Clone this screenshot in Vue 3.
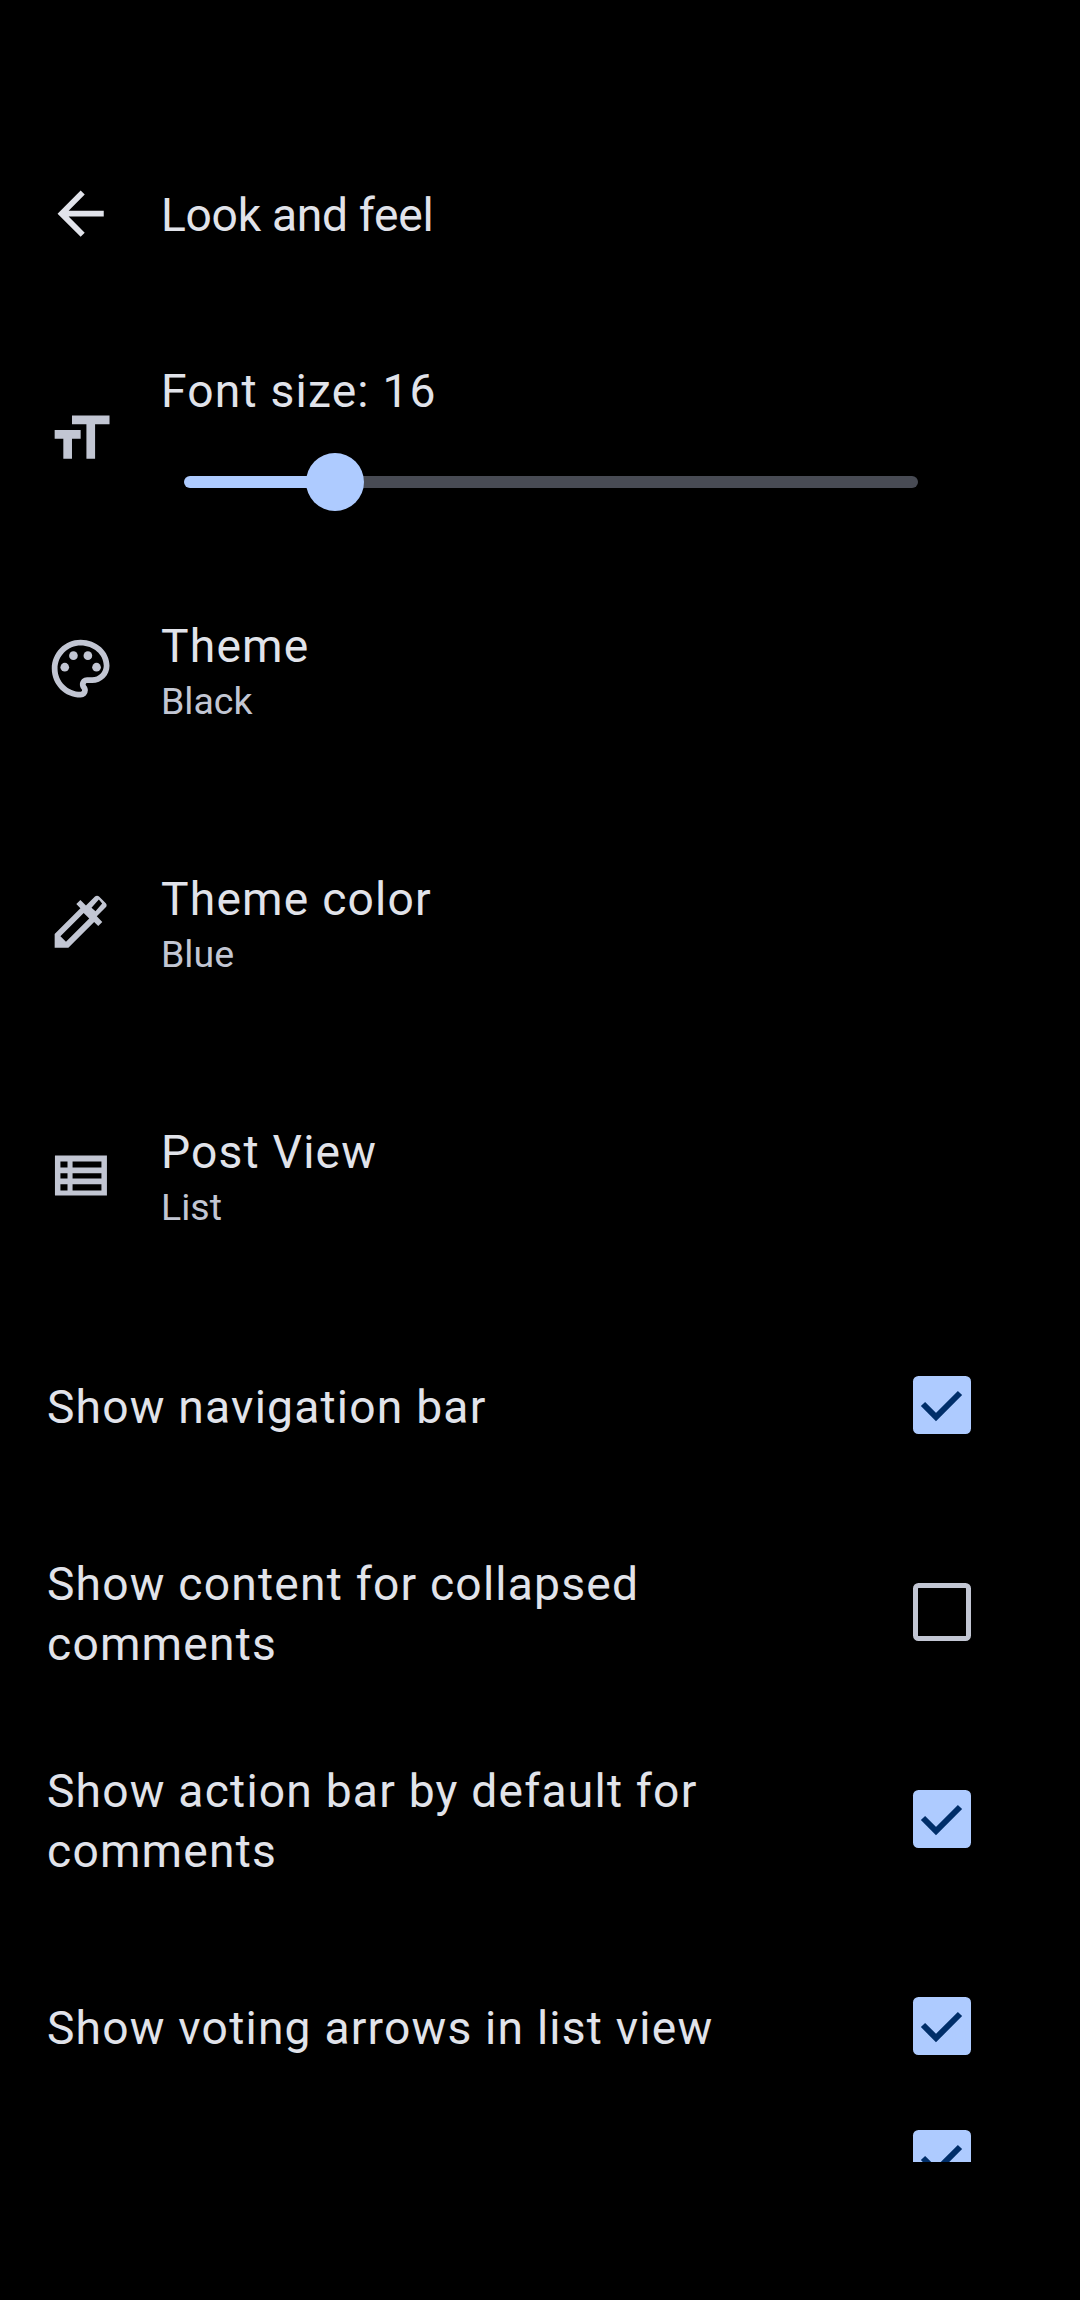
<script setup>
const pickers = [
  { title: 'Theme', value: 'Black', icon: 'palette' },
  { title: 'Theme color', value: 'Blue', icon: 'colorize' },
  { title: 'Post View', value: 'List', icon: 'list' },
]

const toggles = [
  { label: 'Show navigation bar', on: true },
  { label: 'Show content for collapsed comments', on: false },
  { label: 'Show action bar by default for comments', on: true },
  { label: 'Show voting arrows in list view', on: true },
  { label: '', on: true },
]
</script>

<template>
  <div class="screen">
    <header class="topbar">
      <svg class="back" viewBox="0 0 24 24">
        <path d="M20 11H7.83l5.59-5.59L12 4l-8 8 8 8 1.41-1.41L7.83 13H20v-2z" />
      </svg>
      <h1 class="page-title">Look and feel</h1>
    </header>

    <main class="content">
      <section class="font-row">
        <svg class="icon font-icon" viewBox="0 0 24 24">
          <path d="M9 4v3h5v12h3V7h5V4H9zm-6 8h3v7h3v-7h3V9H3v3z" />
        </svg>
        <div class="font-body">
          <div class="title">Font size: 16</div>
          <div class="slider">
            <div class="track-active"></div>
            <div class="track-rest"></div>
            <div class="thumb"></div>
          </div>
        </div>
      </section>

      <section v-for="item in pickers" :key="item.title" class="picker">
        <svg class="icon picker-icon" viewBox="0 0 24 24">
          <template v-if="item.icon === 'palette'">
            <path d="M12 22C6.49 22 2 17.51 2 12S6.49 2 12 2s10 4.04 10 9c0 3.31-2.69 6-6 6h-1.77c-.28 0-.5.22-.5.5 0 .12.05.23.13.33.41.47.64 1.06.64 1.67A2.5 2.5 0 0 1 12 22zm0-18c-4.41 0-8 3.59-8 8s3.59 8 8 8c.28 0 .5-.22.5-.5a.54.54 0 0 0-.14-.35c-.41-.46-.63-1.05-.63-1.65 0-1.38 1.12-2.5 2.5-2.5H16c2.21 0 4-1.79 4-4 0-3.86-3.59-7-8-7z" />
            <circle cx="6.5" cy="11.5" r="1.5" />
            <circle cx="9.5" cy="7.5" r="1.5" />
            <circle cx="14.5" cy="7.5" r="1.5" />
            <circle cx="17.5" cy="11.5" r="1.5" />
          </template>
          <path
            v-else-if="item.icon === 'colorize'"
            fill-rule="evenodd"
            d="M20.71 5.63l-2.34-2.34c-.39-.39-1.02-.39-1.41 0l-3.12 3.12-1.93-1.91-1.41 1.41 1.42 1.42L3 16.25V21h4.75l8.92-8.92 1.42 1.42 1.41-1.41-1.92-1.92 3.12-3.12c.4-.4.4-1.03.01-1.42zM6.92 19L5 17.08l8.06-8.06 1.92 1.92L6.92 19zM15.76 7.2l2.54-2.87 1.15 1.37-2.31 2.67z"
          />
          <path
            v-else
            fill-rule="evenodd"
            d="M3.1 5.35h18v13.9h-18zM5 7.45v2.1h2.45v-2.1zM9.2 7.45v2.1h10v-2.1zM5 11.55v1.8h2.45v-1.8zM9.2 11.55v1.8h10v-1.8zM5 15.35v2.1h2.45v-2.1zM9.2 15.35v2.1h10v-2.1z"
          />
        </svg>
        <div class="picker-body">
          <div class="title">{{ item.title }}</div>
          <div class="value">{{ item.value }}</div>
        </div>
      </section>

      <div class="toggle-list">
        <section
          v-for="(item, i) in toggles"
          :key="i"
          class="toggle"
          :class="{ 'no-label': !item.label }"
        >
          <div class="toggle-label">{{ item.label }}</div>
          <div class="check" :class="{ on: item.on }">
            <svg v-if="item.on" viewBox="0 0 58 58">
              <path d="M10 28l13 13L47 17" />
            </svg>
          </div>
        </section>
      </div>
    </main>
  </div>
</template>

<style>
html,
body {
  background: #000;
}
</style>

<style scoped>
.screen {
  width: 1080px;
  height: 2300px;
  background: #000;
  color: #e1e3ea;
  font-family: Roboto, "Liberation Sans", sans-serif;
  padding-top: 137px;
  box-sizing: border-box;
}

.topbar {
  height: 154px;
  display: flex;
  align-items: center;
}

.back {
  width: 69.3px;
  height: 69.3px;
  margin-left: 45.5px;
  fill: #e1e3ea;
}

.page-title {
  margin: 2px 0 0 46.2px;
  font-size: 46.2px;
  font-weight: 400;
  line-height: 60px;
  letter-spacing: -0.3px;
}

.content {
  height: 1871px;
  overflow: hidden;
}

.icon {
  width: 69.3px;
  height: 69.3px;
  flex: none;
  fill: #c2c6d3;
}

.font-row {
  height: 255px;
  display: flex;
  align-items: flex-start;
}

.font-icon {
  margin: 113px 0 0 45.5px;
}

.font-body {
  margin-left: 46.2px;
  padding-top: 70px;
}

.title {
  font-size: 46.2px;
  line-height: 60px;
  letter-spacing: 1.2px;
}

.slider {
  position: relative;
  margin: 54.5px 0 0 23px;
  width: 734px;
  height: 12px;
  display: flex;
}

.track-active {
  width: 150px;
  background: #aecbff;
  border-radius: 6px 0 0 6px;
}

.track-rest {
  flex: 1;
  background: #484b54;
  border-radius: 0 6px 6px 0;
}

.thumb {
  position: absolute;
  left: 121.6px;
  top: -23px;
  width: 58px;
  height: 58px;
  border-radius: 50%;
  background: #aecbff;
}

.picker {
  height: 253px;
  display: flex;
  align-items: flex-start;
}

.picker-icon {
  margin: 88px 0 0 45.5px;
}

.picker-body {
  margin-left: 46.2px;
  padding-top: 69.5px;
}

.value {
  font-size: 37.5px;
  line-height: 50px;
  color: #c2c6d3;
}

.toggle-list {
  margin-top: -1.5px;
}

.toggle {
  height: 207px;
  padding: 0 109px 0 47px;
  display: flex;
  align-items: center;
  justify-content: space-between;
}

.toggle.no-label {
  height: 58px;
}

.toggle-label {
  width: 700px;
  font-size: 46.2px;
  line-height: 60px;
  letter-spacing: 1.2px;
}

.check {
  width: 58px;
  height: 58px;
  flex: none;
  margin-bottom: 4px;
  box-sizing: border-box;
  border: 5.5px solid #c2c6d3;
  border-radius: 5.5px;
}

.check.on {
  border: 0;
  background: #aecbff;
}

.check svg {
  display: block;
  width: 58px;
  height: 58px;
}

.check path {
  fill: none;
  stroke: #002e69;
  stroke-width: 6px;
}
</style>
